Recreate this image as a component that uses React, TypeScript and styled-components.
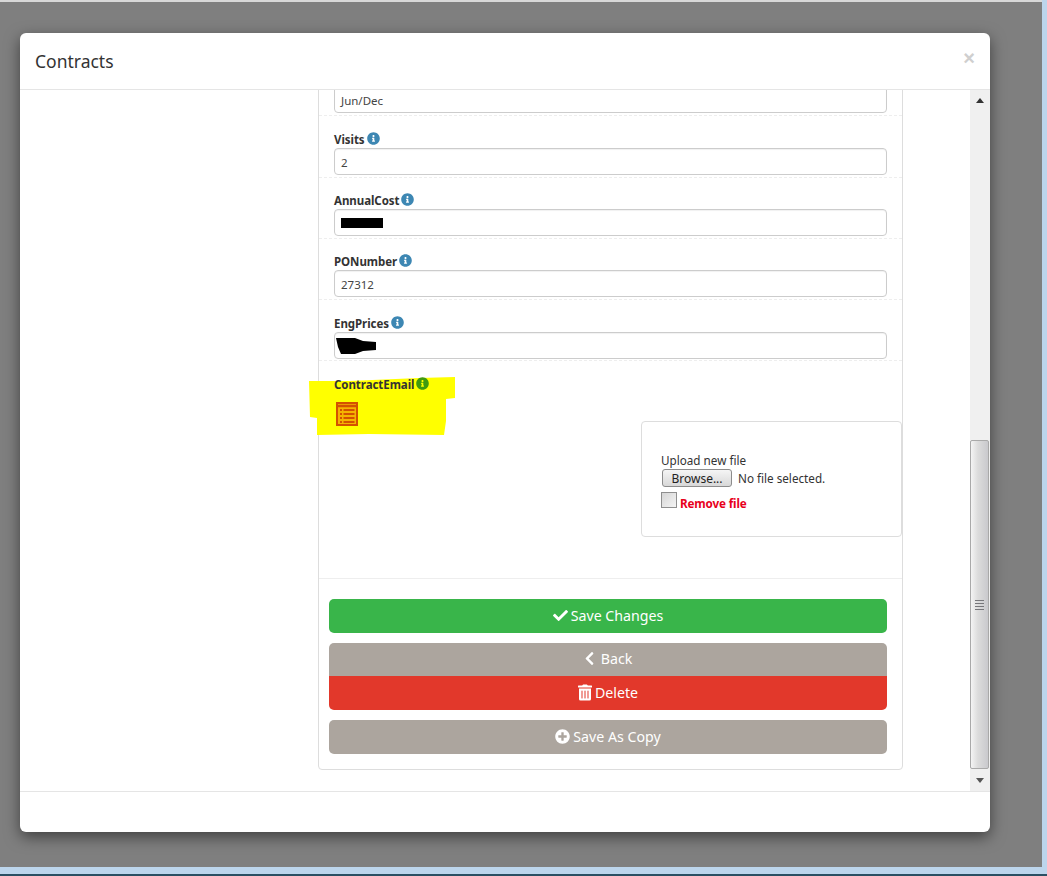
import React from "react";
import styled, { createGlobalStyle } from "styled-components";
import { FaInfoCircle, FaCheck, FaChevronLeft, FaTrashAlt, FaPlusCircle } from "react-icons/fa";

const Global = createGlobalStyle`
  html, body { margin: 0; padding: 0; height: 876px; overflow: hidden; background: #bcd5ec; }
  #root { height: 876px; }
  * { box-sizing: border-box; }
`;

const Screen = styled.div`
  width: 1047px; height: 876px; display: flex; flex-direction: column;
  font-family: "Noto Sans", "Open Sans", sans-serif; color: #333;
  border-bottom: 2px solid #2a4f63;
`;
const Backdrop = styled.div`
  width: 1042px; height: 867px; background: #7f7f7f; border-top: 2px solid #d8d8d8;
  padding: 31px 52px 0 20px;
`;
const Modal = styled.div`
  width: 970px; height: 799px; background: #fff; border-radius: 6px;
  box-shadow: 0 5px 15px rgba(0,0,0,.5); display: flex; flex-direction: column; overflow: hidden;
`;
const Header = styled.header`
  height: 57px; flex: none; border-bottom: 1px solid #e5e5e5; display: flex; justify-content: space-between;
  padding: 0 15px;
`;
const Title = styled.h4`
  margin: 17px 0 0; font-size: 17.5px; font-weight: 400; line-height: 22px; color: #333;
`;
const Close = styled.span`
  margin-top: 13px; font-size: 20px; line-height: 24px; font-weight: 700; color: #cfcfcf;
  font-family: "Liberation Sans", sans-serif;
`;
const Body = styled.div`
  height: 702px; flex: none; display: flex; overflow: hidden; border-bottom: 1px solid #e5e5e5; position: relative;
`;
const Main = styled.div`
  width: 950px; flex: none; padding-left: 298px; overflow: hidden;
`;
const Panel = styled.div`
  width: 585px; height: 714px; margin-top: -34px; border: 1px solid #ddd; border-radius: 4px; background: #fff;
  position: relative;
`;
const Row = styled.div<{ $pad?: number }>`
  height: 61px; padding: ${p => p.$pad ?? 13}px 15px 0; border-bottom: 1px dashed #eee;
`;
const FirstRow = styled.div`
  height: 59px; padding: 29px 15px 0; border-bottom: 1px dashed #eee; margin-bottom: 1px;
`;
const Label = styled.label`
  display: flex; align-items: center; gap: 2px; height: 18px;
  font-size: 11.5px; font-weight: 700; color: #333; letter-spacing: -0.06px;
`;
const InfoIcon = styled(FaInfoCircle)<{ $green?: boolean }>`
  width: 13px; height: 13px; margin-top: -1px; color: ${p => (p.$green ? "#3f9a0f" : "#3d87b3")};
`;
const Field = styled.div`
  width: 553px; height: 27px; border: 1px solid #ccc; border-radius: 4px; padding: 2px 6px 0;
  display: flex; align-items: center; font-size: 11.5px; color: #444; background: #fff;
  box-shadow: inset 0 1px 1px rgba(0,0,0,.06);
`;
const Redaction = styled.div`
  width: 42px; height: 10px; margin-top: -2px; background: #000;
`;
const Scribble = styled.svg`
  width: 42px; height: 18px; margin: -2px 0 0 -6px; flex: none;
`;
const EmailRow = styled.div`
  height: 218px; padding: 15px 15px 0; border-bottom: 1px solid #eee; position: relative;
`;
const Highlight = styled.svg`
  position: absolute; left: -10px; top: 15px; width: 148px; height: 61px; z-index: 0;
`;
const EmailLabel = styled(Label)`
  position: relative; z-index: 1; margin-top: -1px;
`;
const ListGlyph = styled.svg`
  display: block; position: relative; z-index: 1; width: 22px; height: 24px; margin: 9px 0 0 2px;
`;
const UploadBox = styled.div`
  position: absolute; left: 322px; top: 60px; width: 261px; height: 116px; border: 1px solid #ddd; border-radius: 4px;
  padding: 30px 19px 0; font-size: 11.7px; color: #333; background: #fff; z-index: 1;
`;
const UploadLine = styled.div`
  height: 17px; line-height: 16px;
`;
const FileLine = styled.div`
  display: flex; align-items: center; gap: 6px; height: 18px; padding-left: 1px; margin-top: 0;
`;
const Browse = styled.span`
  width: 70px; height: 18px; border: 1px solid #8c8c8c; border-radius: 3px;
  background: linear-gradient(#f5f5f5, #d8d8d8); display: flex; align-items: center; justify-content: center;
  font-size: 12px; color: #222;
`;
const RemoveLine = styled.div`
  display: flex; align-items: flex-start; gap: 3px; margin-top: 5px; height: 20px;
`;
const Check = styled.span`
  width: 16px; height: 16px; border: 1px solid #8f8f8f; background: linear-gradient(135deg, #d6d6d6, #f4f4f4);
`;
const RemoveText = styled.b`
  color: #e8001c; font-size: 11.7px; letter-spacing: -0.15px; line-height: 15px; margin-top: 4px;
`;
const Actions = styled.div`
  padding: 20px 15px 0 10px; display: flex; flex-direction: column;
`;
const Btn = styled.button<{ $bg: string; $top?: number; $shape?: "all" | "top" | "bottom" }>`
  width: 558px; height: ${p => (p.$shape === "top" ? 33 : 34)}px; margin-top: ${p => p.$top ?? 0}px;
  border: 0; color: #fff; background: ${p => p.$bg}; font: inherit; font-size: 14.2px;
  display: flex; align-items: center; justify-content: center; gap: 3px; padding: 0 0 2px;
  border-radius: ${p => (p.$shape === "top" ? "5px 5px 0 0" : p.$shape === "bottom" ? "0 0 5px 5px" : "5px")};
  svg { width: 15px; height: 15px; }
`;
const BackBtn = styled(Btn)`
  gap: 6px;
  svg { width: 11px; height: 15px; }
`;
const DeleteBtn = styled(Btn)`
  svg { width: 14px; height: 17px; }
`;
const Scrollbar = styled.div`
  width: 20px; flex: none; background: #f0f0f0; display: flex; flex-direction: column;
`;
const Arrow = styled.div<{ $down?: boolean }>`
  flex: none; height: 21px; display: flex; align-items: center; justify-content: center; padding-right: 1px;
  &::before {
    content: ""; border-left: 4.5px solid transparent; border-right: 4.5px solid transparent;
    ${p => (p.$down ? "border-top: 5px solid #555;" : "border-bottom: 5px solid #333;")}
  }
`;
const Track = styled.div`
  flex: 1; width: 100%; padding-top: 329px;
`;
const Thumb = styled.div`
  width: 19px; height: 329px; border: 1px solid #a9a9a9; border-radius: 2px;
  background: linear-gradient(90deg, #f4f4f4, #dcdcdc 40%, #c9c9cd);
  display: flex; flex-direction: column; align-items: center; justify-content: center; gap: 2px;
`;
const Grip = styled.i`
  display: block; width: 9px; height: 1px; background: #77777b;
`;
const Footer = styled.div`
  flex: 1;
`;

const rows: [string, string, number?][] = [["Visits", "2"], ["AnnualCost", "R"], ["PONumber", "27312"], ["EngPrices", "S", 14]];

export default function App() {
  return (
    <Screen>
      <Global />
      <Backdrop>
        <Modal>
          <Header>
            <Title>Contracts</Title>
            <Close>×</Close>
          </Header>
          <Body>
            <Main>
              <Panel>
                <FirstRow>
                  <Field>Jun/Dec</Field>
                </FirstRow>
                {rows.map(([name, value, pad]) => (
                  <Row key={name} $pad={pad}>
                    <Label>{name}<InfoIcon /></Label>
                    <Field>
                      {value === "R" ? <Redaction /> : value === "S" ? (
                        <Scribble viewBox="0 0 42 18">
                          <path d="M1 1 L20 1 L28 4 L41 5 L41 13 L28 14 L20 17 L6 17 L3 10 Z" fill="#000" />
                        </Scribble>
                      ) : value}
                    </Field>
                  </Row>
                ))}
                <EmailRow>
                  <Highlight viewBox="0 0 148 61">
                    <path d="M0 5 L40 5 L110 2 L146 1 L146 22 L137 23 L137 45 L135 59 L60 58 L8 59 L8 42 L1 41 Z" fill="#ffff00" />
                  </Highlight>
                  <EmailLabel>ContractEmail<InfoIcon $green /></EmailLabel>
                  <ListGlyph viewBox="0 0 22 24">
                    <rect x="1" y="1" width="20" height="22" fill="#f5b400" stroke="#d45200" strokeWidth="2" />
                    <path d="M1 4h20" stroke="#d45200" strokeWidth="2.5" />
                    <path d="M4 8h2M7.5 8h11M4 12h2M7.5 12h11M4 16h2M7.5 16h11M4 20h2M7.5 20h11" stroke="#d45200" strokeWidth="1.8" />
                  </ListGlyph>
                  <UploadBox>
                    <UploadLine>Upload new file</UploadLine>
                    <FileLine><Browse>Browse...</Browse>No file selected.</FileLine>
                    <RemoveLine><Check /><RemoveText>Remove file</RemoveText></RemoveLine>
                  </UploadBox>
                </EmailRow>
                <Actions>
                  <Btn $bg="#39b54a"><FaCheck />Save Changes</Btn>
                  <BackBtn $bg="#aca59e" $top={10} $shape="top"><FaChevronLeft />Back</BackBtn>
                  <DeleteBtn $bg="#e2382b" $shape="bottom"><FaTrashAlt />Delete</DeleteBtn>
                  <Btn $bg="#aca59e" $top={10}><FaPlusCircle />Save As Copy</Btn>
                </Actions>
              </Panel>
            </Main>
            <Scrollbar>
              <Arrow />
              <Track><Thumb><Grip /><Grip /><Grip /><Grip /></Thumb></Track>
              <Arrow $down />
            </Scrollbar>
          </Body>
          <Footer />
        </Modal>
      </Backdrop>
    </Screen>
  );
}
